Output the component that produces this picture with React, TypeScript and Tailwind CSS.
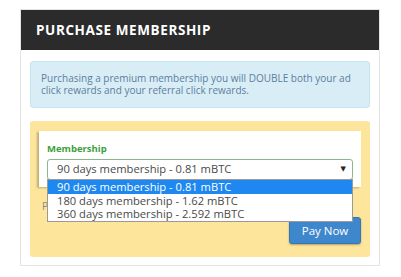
export default function App() {
  const font = { fontFamily: '"Open Sans", "DejaVu Sans", sans-serif' };
  return (
    <div className="w-[401px] h-[277px] bg-white overflow-hidden" style={font}>
      <div className="ml-[20px] mt-[9px] w-[360px] h-[257px] border border-[#e4e4e4] bg-white">
        <div className="h-[40px] bg-[#2b2b2b] flex items-center pl-[15px]">
          <h2 className="text-white font-bold text-[13.5px] tracking-[0.6px]">PURCHASE MEMBERSHIP</h2>
        </div>
        <div className="px-[9px] pt-[11px]">
          <div className="h-[47px] bg-[#d9edf7] border border-[#c6e4f1] rounded-[3px] px-[10px] pt-[10px] text-[10px] leading-[12px] text-[#5b7f9b]">
            Purchasing a premium membership you will DOUBLE both your ad click rewards and your referral click rewards.
          </div>
          <div className="mt-[13px] h-[136px] bg-[#fde59b] rounded-[3px] px-[9px] pt-[10px] flex flex-col">
            <div className="relative h-[56px] bg-white shadow-[-2px_1px_2px_rgba(0,0,0,0.25)] px-[8px] pt-[12px]">
              <label className="block text-[#3d9e3d] font-bold text-[9.5px] leading-[12px]">Membership</label>
              <div className="mt-[4px] h-[21px] border border-[#8bb88b] rounded-[3px] flex items-center justify-between pl-[9px] pr-[6px] text-[11.2px] text-[#4a4a4a]">
                <span>90 days membership - 0.81 mBTC</span>
                <span className="text-[7px] text-[#222]">▼</span>
              </div>
              <div className="absolute left-[8px] top-[48px] w-[306px] bg-white border border-[#9a9a9a] text-[11.2px] leading-[13.5px] text-[#4a4a4a] z-10">
                <div className="bg-[#1e88f0] text-white pl-[9px]">90 days membership - 0.81 mBTC</div>
                <div className="pl-[9px]">180 days membership - 1.62 mBTC</div>
                <div className="pl-[9px]">360 days membership - 2.592 mBTC</div>
              </div>
            </div>
            <p className="mt-[12px] pl-[3px] text-[10px] leading-[14px] text-[#888]">P</p>
            <div className="flex justify-end mt-[4px]">
              <button className="w-[72px] h-[27px] bg-[#3f87cc] border border-[#3577b5] rounded-[3px] text-white text-[11.5px] shadow-[0_1px_2px_rgba(0,0,0,0.3)]">Pay Now</button>
            </div>
          </div>
        </div>
      </div>
    </div>
  );
}
